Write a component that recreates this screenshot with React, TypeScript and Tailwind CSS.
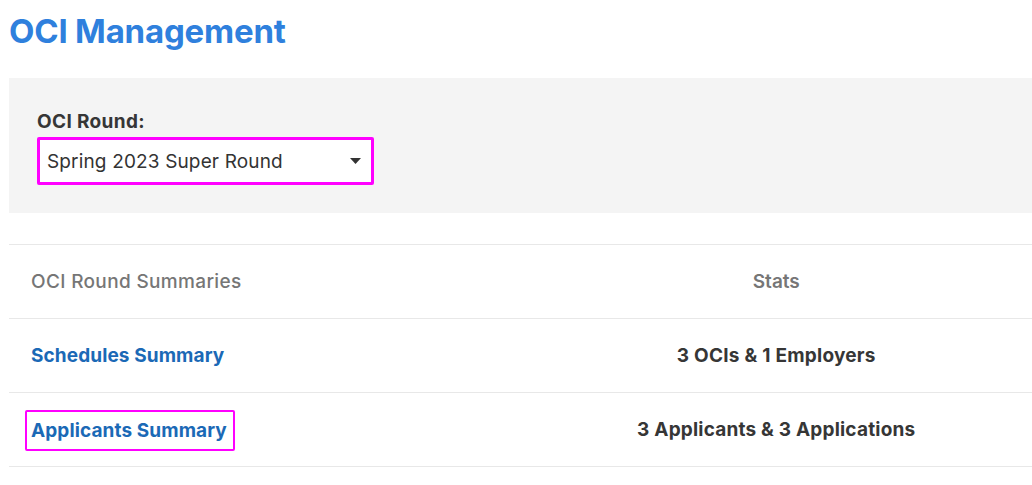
import React from "react";

export default function App() {
  const font = { fontFamily: "Inter, 'Liberation Sans', sans-serif" };
  return (
    <div className="w-[1032px] h-[485px] overflow-hidden bg-white pl-[9px]" style={font}>
      <h1 className="pt-[11px] h-[78px] text-[33px] leading-[40px] font-bold text-[#2f80dd] tracking-[-0.2px]">
        OCI Management
      </h1>
      <div className="h-[135px] bg-[#f4f4f4] pl-[28px] pt-[33px]">
        <div className="text-[19px] leading-[22px] font-bold text-[#363636] tracking-[0.35px]">OCI Round:</div>
        <div className="mt-[4px] w-[337px] h-[48px] border-[3px] border-[#ff00ff] rounded-[2px] bg-white flex items-center justify-between pl-[7px] pr-[10px]">
          <span className="pt-[3px] text-[19px] text-[#333] tracking-[0.15px]">Spring 2023 Super Round</span>
          <svg width="11" height="6" viewBox="0 0 11 6">
            <path d="M0 0 L11 0 L5.5 6 Z" fill="#333" />
          </svg>
        </div>
      </div>
      <div className="mt-[31px] border-t border-[#e8e8e8]">
        <div className="grid grid-cols-2 h-[74px] items-center border-b border-[#e8e8e8] pt-[2px]">
          <div className="pl-[22px] text-[19px] text-[#767676] font-medium tracking-[0.35px]">OCI Round Summaries</div>
          <div className="text-center text-[19px] text-[#767676] font-semibold">Stats</div>
        </div>
        <div className="grid grid-cols-2 h-[74px] items-center border-b border-[#e8e8e8] pt-[2px]">
          <div className="pl-[22px]">
            <a className="text-[19px] font-bold text-[#1b69b6] tracking-[0.1px]">Schedules Summary</a>
          </div>
          <div className="text-center text-[19px] text-[#363636] font-bold tracking-[0.25px]">3 OCIs &amp; 1 Employers</div>
        </div>
        <div className="grid grid-cols-2 h-[74px] items-center border-b border-[#e8e8e8] pt-[2px]">
          <div className="pl-[16px]">
            <a className="inline-block pl-[4px] pr-[6px] pt-[8px] pb-[7px] border-2 border-[#ff00ff] rounded-[2px] text-[19px] leading-[22px] font-bold text-[#1b69b6] tracking-[0.1px]">
              Applicants Summary
            </a>
          </div>
          <div className="text-center text-[19px] text-[#363636] font-bold tracking-[0.2px]">3 Applicants &amp; 3 Applications</div>
        </div>
      </div>
    </div>
  );
}
